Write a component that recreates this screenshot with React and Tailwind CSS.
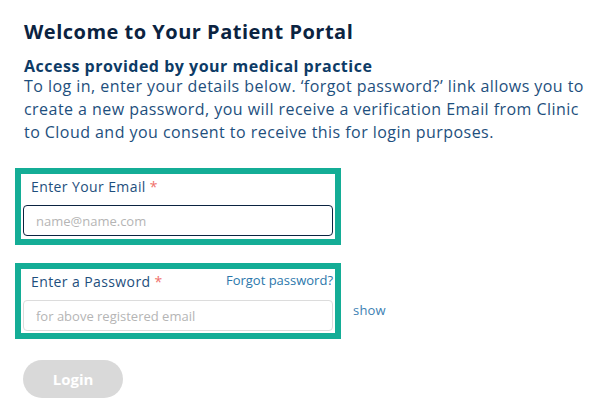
export default function App() {
  return (
    <div className="w-[610px] h-[407px] bg-white pl-[24px] pt-[19px] font-['Open_Sans',sans-serif] overflow-hidden">
      <h1 className="text-[20px] leading-[26px] font-bold tracking-[0.5px] text-[#0b2341]">Welcome to Your Patient Portal</h1>
      <h2 className="mt-[12px] text-[16px] leading-[18px] font-bold tracking-[0.5px] text-[#0d3b66]">Access provided by your medical practice</h2>
      <p className="text-[16px] leading-[23px] tracking-[0.45px] text-[#1e4f7d] whitespace-nowrap">
        To log in, enter your details below. ‘forgot password?’ link allows you to<br />
        create a new password, you will receive a verification Email from Clinic<br />
        to Cloud and you consent to receive this for login purposes.
      </p>
      <div className="-ml-[9px] mt-[24px] w-[326px] border-[6px] border-[#14ad96] px-[2px] pt-[2px] pb-[3px]">
        <div className="pl-[8px] h-[20px] mb-[9px] flex items-center text-[14px] tracking-[0.4px] text-[#1e4f7d]">
          Enter Your Email<span className="ml-[4px] text-[#f0706b]">*</span>
        </div>
        <input
          className="block w-full h-[31px] rounded-[4px] border border-[#0b2341] px-[12px] text-[13px] text-[#333] placeholder:text-[#b5b5b5] outline-none"
          placeholder="name@name.com"
        />
      </div>
      <div className="-ml-[9px] mt-[18px] flex items-end">
        <div className="w-[326px] border-[6px] border-[#14ad96] px-[2px] pt-[2px] pb-[2px]">
          <div className="pl-[8px] h-[20px] mb-[9px] flex items-center justify-between text-[14px] tracking-[0.4px] text-[#1e4f7d]">
            <span>Enter a Password<span className="ml-[4px] text-[#f0706b]">*</span></span>
            <span className="text-[13px] tracking-normal text-[#2b77ab]">Forgot password?</span>
          </div>
          <input
            type="password"
            className="block w-full h-[31px] rounded-[4px] border border-[#dcdcdc] px-[12px] text-[13px] placeholder:text-[#b5b5b5] outline-none"
            placeholder="for above registered email"
          />
        </div>
        <span className="ml-[12px] mb-[19px] text-[13px] tracking-[0.2px] text-[#3d7fb3]">show</span>
      </div>
      <button className="mt-[21px] -ml-[1px] w-[100px] h-[38px] rounded-full bg-[#d9d9d9] text-white font-bold text-[15px]">Login</button>
    </div>
  );
}
